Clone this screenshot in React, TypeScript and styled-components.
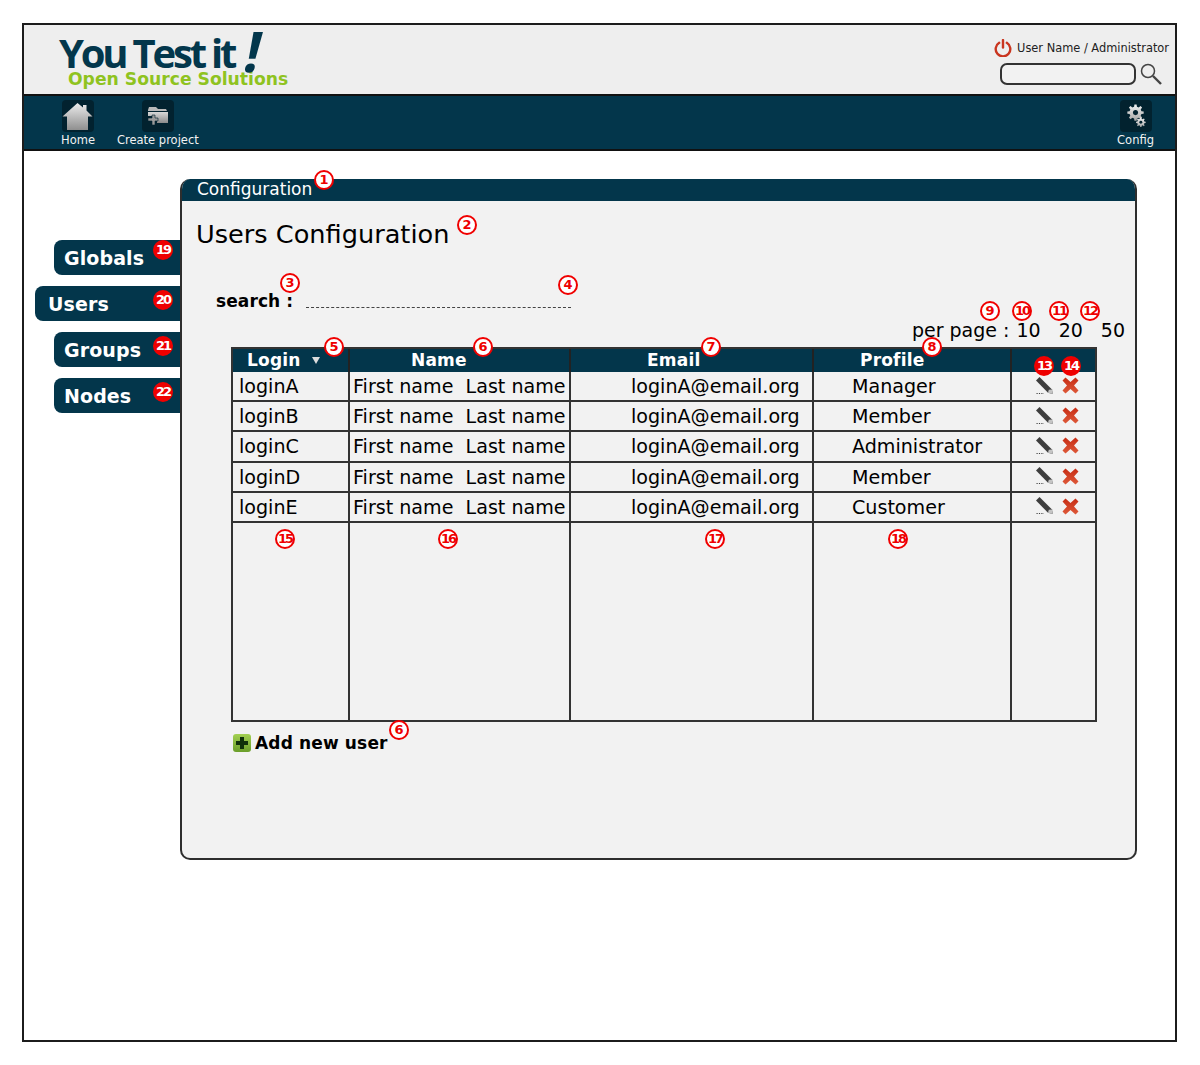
import React from 'react';
import styled, { createGlobalStyle } from 'styled-components';

const GlobalStyle = createGlobalStyle`
  html, body {
    margin: 0;
    padding: 0;
    background: #ffffff;
    font-family: "DejaVu Sans", sans-serif;
    color: #000000;
  }
`;

const Page = styled.div`
  position: relative;
  width: 1200px;
  height: 1065px;
  padding: 23px 0 0 22px;
  box-sizing: border-box;
`;

const Frame = styled.div`
  width: 1155px;
  height: 1019px;
  box-sizing: border-box;
  border: 2px solid #1c1c1c;
  display: flex;
  flex-direction: column;
`;

const Header = styled.header`
  height: 69px;
  background: #eeeeee;
  display: flex;
  justify-content: space-between;
  padding: 3px 6px 0 35px;
  box-sizing: border-box;
`;

const Logo = styled.div`
  display: flex;
  flex-direction: column;
`;

const LogoMain = styled.div`
  display: flex;
  align-items: flex-start;
  height: 42px;
  font-family: "Open Sans", sans-serif;
  font-weight: 700;
  font-size: 40px;
  line-height: 50px;
  letter-spacing: -3.2px;
  color: #03374c;
  white-space: pre;
`;

const LogoBang = styled.span`
  display: inline-block;
  font-size: 56px;
  font-weight: 700;
  line-height: 44px;
  margin-left: 12px;
  transform: skewX(-13deg);
`;

const LogoSub = styled.div`
  font-size: 17.2px;
  font-weight: 700;
  line-height: 18px;
  margin: 0 0 0 9px;
  color: #8fc31f;
`;

const UserArea = styled.div`
  display: flex;
  flex-direction: column;
  align-items: flex-end;
`;

const UserLine = styled.div`
  display: flex;
  align-items: center;
  gap: 5px;
  height: 22px;
  margin-top: 9px;
  font-size: 11.4px;
  color: #222222;
`;

const SearchLine = styled.div`
  display: flex;
  align-items: center;
  gap: 4px;
  margin: 4px 7px 0 0;
`;

const SearchInput = styled.div`
  width: 136px;
  height: 22px;
  box-sizing: border-box;
  border: 2px solid #333333;
  border-radius: 7px;
  background: #f2f2f2;
`;

const Nav = styled.nav`
  height: 57px;
  box-sizing: border-box;
  background: #03364b;
  border-top: 2px solid #111111;
  border-bottom: 2px solid #111111;
  display: flex;
  gap: 22px;
  padding: 4px 21px 0 37px;
`;

const NavItem = styled.div<{ $right?: boolean }>`
  display: flex;
  flex-direction: column;
  align-items: center;
  gap: 1px;
  color: #f2f2f2;
  font-size: 11.5px;
  line-height: 14px;
  margin-left: ${(p) => (p.$right ? 'auto' : '0')};
`;

const NavTile = styled.div`
  width: 32px;
  height: 32px;
  background: #02222f;
  border-radius: 4px;
  display: flex;
  align-items: center;
  justify-content: center;
`;

const Main = styled.main`
  flex: 1;
  display: flex;
  padding-top: 28px;
  background: #ffffff;
`;

const Sidebar = styled.div`
  width: 156px;
  flex-shrink: 0;
  display: flex;
  flex-direction: column;
  align-items: flex-end;
  gap: 11px;
  padding-top: 61px;
`;

const Tab = styled.div<{ $active?: boolean }>`
  width: ${(p) => (p.$active ? '145px' : '126px')};
  height: 35px;
  box-sizing: border-box;
  background: #03364b;
  border-radius: 8px 0 0 8px;
  color: #ffffff;
  font-size: 19px;
  font-weight: 700;
  letter-spacing: 0.1px;
  line-height: 37px;
  padding-left: ${(p) => (p.$active ? '13px' : '10px')};
`;

const Panel = styled.section`
  width: 957px;
  height: 681px;
  box-sizing: border-box;
  border: 2px solid #2e2e2e;
  border-top: 0;
  border-radius: 10px;
  background: #f2f2f2;
  overflow: hidden;
`;

const PanelTitle = styled.div`
  height: 22px;
  background: #03364b;
  color: #ffffff;
  font-size: 17px;
  line-height: 20px;
  padding-left: 15px;
`;

const Heading = styled.h1`
  margin: 15px 0 0 14px;
  height: 36px;
  font-size: 25.6px;
  font-weight: 400;
  line-height: 36px;
`;

const SearchRow = styled.div`
  display: flex;
  align-items: center;
  gap: 13px;
  height: 22px;
  margin: 38px 0 0 34px;
`;

const SearchLabel = styled.span`
  font-size: 17px;
  font-weight: 700;
  letter-spacing: 0.1px;
`;

const DashedField = styled.div`
  width: 265px;
  height: 10px;
  margin-top: 2px;
  border-bottom: 1px dashed #444444;
`;

const PerPage = styled.div`
  display: flex;
  justify-content: flex-end;
  gap: 18px;
  height: 22px;
  margin: 7px 10px 0 0;
  font-size: 19px;
  line-height: 22px;
`;

const PerPageLabel = styled.span`
  margin-right: -11px;
`;

const Table = styled.div`
  width: 866px;
  margin: 6px 0 0 49px;
  box-sizing: border-box;
  border: 2px solid #333333;
`;

const Row = styled.div<{ $kind?: 'head' | 'body' | 'filler' }>`
  display: grid;
  grid-template-columns: 117px 221px 243px 198px 83px;
  height: ${(p) => (p.$kind === 'head' ? '23px' : p.$kind === 'filler' ? '197px' : '30.2px')};
  box-sizing: border-box;
  background: ${(p) => (p.$kind === 'head' ? '#03364b' : 'transparent')};
  border-bottom: ${(p) => (p.$kind === 'body' ? '2px solid #333333' : '0')};
`;

const Cell = styled.div<{ $pad?: number }>`
  border-right: 2px solid #333333;
  padding-left: ${(p) => p.$pad ?? 0}px;
  padding-top: 2px;
  font-size: 19.1px;
  line-height: 26px;
  white-space: pre;
  display: flex;
  align-items: center;
  overflow: hidden;

  &:last-child {
    border-right: 0;
  }
`;

const HeadCell = styled(Cell)`
  border-right-color: #222222;
  color: #ffffff;
  padding-top: 0;
  padding-bottom: 2px;
  font-size: 17px;
  font-weight: 700;
  letter-spacing: 0.2px;
  line-height: 20px;
`;

const SortArrow = styled.span`
  width: 0;
  height: 0;
  margin: 2px 0 0 11px;
  border-left: 4px solid transparent;
  border-right: 4px solid transparent;
  border-top: 7px solid #dddddd;
`;

const Actions = styled.div`
  display: flex;
  align-items: center;
  gap: 9px;
  padding: 0 0 3px 24px;
`;

const AddRow = styled.div`
  display: flex;
  align-items: center;
  gap: 4px;
  height: 20px;
  margin: 11px 0 0 51px;
  font-size: 17px;
  font-weight: 700;
  letter-spacing: 0.15px;
`;

const AddIcon = styled.div`
  width: 18px;
  height: 18px;
  border-radius: 3px;
  background: linear-gradient(#a3d052, #6a9e2a);
  display: flex;
  align-items: center;
  justify-content: center;
`;

const Marker = styled.div<{ $x: number; $y: number; $solid?: boolean; $small?: boolean }>`
  position: absolute;
  left: ${(p) => p.$x - 10}px;
  top: ${(p) => p.$y - 10}px;
  width: 20px;
  height: 20px;
  box-sizing: border-box;
  border: 2px solid #f00000;
  border-radius: 50%;
  background: ${(p) => (p.$solid ? '#ee0000' : '#ffffff')};
  color: ${(p) => (p.$solid ? '#ffffff' : '#ee0000')};
  font-size: 13px;
  font-weight: 700;
  line-height: 16px;
  letter-spacing: ${(p) => (p.$small ? '-2px' : '0')};
  text-align: center;
`;

const HomeIcon = () => (
  <svg width="31" height="29" viewBox="0 0 31 29">
    <defs>
      <linearGradient id="greyA" x1="0" y1="0" x2="0" y2="1">
        <stop offset="0" stopColor="#ececec" />
        <stop offset="1" stopColor="#8f8f8f" />
      </linearGradient>
    </defs>
    <path d="M15.5 1 L21 5.5 V3 H24.5 V8.5 L30.5 14.5 H26 V28 H5 V14.5 H0.5 Z" fill="url(#greyA)" />
  </svg>
);

const FolderIcon = () => (
  <svg width="22" height="22" viewBox="0 0 22 22">
    <defs>
      <linearGradient id="greyB" x1="0" y1="0" x2="0" y2="1">
        <stop offset="0" stopColor="#d8d8d8" />
        <stop offset="1" stopColor="#8a8a8a" />
      </linearGradient>
    </defs>
    <path d="M1 5 L2 2 H9 L11 4 H19 L20 6 H1 Z" fill="#b9b9b9" />
    <path d="M1 7 H21 V18 H10 V15 H8 V11 H1 Z" fill="url(#greyB)" />
    <path d="M5 10 H8 V13 H11 V16 H8 V20 H5 V16 H1 V13 H5 Z" fill="#9a9a9a" stroke="#02222f" strokeWidth="0.6" />
  </svg>
);

// toothed outline, computed so both gears share one shape
const gearPath = (cx: number, cy: number, r: number, teeth: number) => {
  const step = (Math.PI * 2) / teeth;
  const inner = r * 0.74;
  const points: string[] = [];
  for (let i = 0; i < teeth; i++) {
    const a = i * step;
    const corners = [
      [inner, a - step * 0.3],
      [r, a - step * 0.17],
      [r, a + step * 0.17],
      [inner, a + step * 0.3],
    ];
    corners.forEach(([rad, ang]) => {
      points.push(`${(cx + rad * Math.cos(ang)).toFixed(2)} ${(cy + rad * Math.sin(ang)).toFixed(2)}`);
    });
  }
  return `M${points.join(' L')} Z`;
};

const GearsIcon = () => (
  <svg width="32" height="32" viewBox="0 0 33 33">
    <defs>
      <linearGradient id="greyC" x1="0" y1="0" x2="0" y2="1">
        <stop offset="0" stopColor="#f2f2f2" />
        <stop offset="1" stopColor="#a6a6a6" />
      </linearGradient>
    </defs>
    <path d={gearPath(16, 13, 8.5, 8)} fill="url(#greyC)" />
    <circle cx="16" cy="13" r="2.6" fill="#02222f" />
    <path d={gearPath(21.5, 23, 5, 8)} fill="url(#greyC)" />
    <circle cx="21.5" cy="23" r="1.5" fill="#02222f" />
  </svg>
);

const PowerIcon = () => (
  <svg width="18" height="18" viewBox="0 0 18 18" fill="none" stroke="#c9351f" strokeWidth="2.4" strokeLinecap="round">
    <path d="M5.2 3.8 A7.3 7.3 0 1 0 12.8 3.8" />
    <path d="M9 1 V8.5" />
  </svg>
);

const MagnifierIcon = () => (
  <svg width="22" height="22" viewBox="0 0 22 22" fill="none" stroke="#444444">
    <circle cx="8" cy="8" r="6.5" strokeWidth="1.5" />
    <path d="M13 13 L21 21" strokeWidth="2.4" />
  </svg>
);

const PencilIcon = () => (
  <svg width="17" height="18" viewBox="0 0 17 18">
    <path d="M3.5 0 L16 12.5 L16.8 17 L12 15.8 L0 3.5 Z" fill="#3e3e3e" />
    <path d="M12.8 12.8 L16 12.5 L16.8 17 L12 15.8 Z" fill="#c4c4c4" />
    <path d="M0.5 16.5 H8" stroke="#444444" strokeWidth="1.2" strokeDasharray="1.2 1.2" />
  </svg>
);

const CrossIcon = () => (
  <svg width="17" height="17" viewBox="0 0 17 17">
    <defs>
      <linearGradient id="redX" x1="0" y1="0" x2="0" y2="1">
        <stop offset="0" stopColor="#c72c14" />
        <stop offset="1" stopColor="#de5a3a" />
      </linearGradient>
    </defs>
    <path
      d="M3.5 0.5 L8.5 5 L13.5 0.5 L16.5 3.5 L12 8.5 L16.5 13.5 L13.5 16.5 L8.5 12 L3.5 16.5 L0.5 13.5 L5 8.5 L0.5 3.5 Z"
      fill="url(#redX)"
    />
  </svg>
);

const PlusIcon = () => (
  <svg width="14" height="14" viewBox="0 0 14 14">
    <path d="M5 1 H9 V5 H13 V9 H9 V13 H5 V9 H1 V5 H5 Z" fill="#10300a" />
  </svg>
);

const users = [
  { login: 'loginA', profile: 'Manager' },
  { login: 'loginB', profile: 'Member' },
  { login: 'loginC', profile: 'Administrator' },
  { login: 'loginD', profile: 'Member' },
  { login: 'loginE', profile: 'Customer' },
];

const markers = [
  { n: 1, x: 324, y: 180 },
  { n: 2, x: 467, y: 225 },
  { n: 3, x: 290, y: 283 },
  { n: 4, x: 568, y: 285 },
  { n: 5, x: 334, y: 347 },
  { n: 6, x: 483, y: 347 },
  { n: 7, x: 711, y: 347 },
  { n: 8, x: 932, y: 347 },
  { n: 9, x: 990, y: 311 },
  { n: 10, x: 1022, y: 311 },
  { n: 11, x: 1059, y: 311 },
  { n: 12, x: 1090, y: 311 },
  { n: 13, x: 1044, y: 366, solid: true },
  { n: 14, x: 1071, y: 366, solid: true },
  { n: 15, x: 285, y: 539 },
  { n: 16, x: 448, y: 539 },
  { n: 17, x: 715, y: 539 },
  { n: 18, x: 898, y: 539 },
  { n: 19, x: 163, y: 250, solid: true },
  { n: 20, x: 163, y: 300, solid: true },
  { n: 21, x: 163, y: 346, solid: true },
  { n: 22, x: 163, y: 392, solid: true },
  { n: 6, x: 399, y: 730 },
];

function App() {
  return (
    <Page>
      <GlobalStyle />
      <Frame>
        <Header>
          <Logo>
            <LogoMain>
              You Test it<LogoBang>!</LogoBang>
            </LogoMain>
            <LogoSub>Open Source Solutions</LogoSub>
          </Logo>
          <UserArea>
            <UserLine>
              <PowerIcon />
              User Name / Administrator
            </UserLine>
            <SearchLine>
              <SearchInput />
              <MagnifierIcon />
            </SearchLine>
          </UserArea>
        </Header>
        <Nav>
          <NavItem>
            <NavTile>
              <HomeIcon />
            </NavTile>
            Home
          </NavItem>
          <NavItem>
            <NavTile>
              <FolderIcon />
            </NavTile>
            Create project
          </NavItem>
          <NavItem $right>
            <NavTile>
              <GearsIcon />
            </NavTile>
            Config
          </NavItem>
        </Nav>
        <Main>
          <Sidebar>
            <Tab>Globals</Tab>
            <Tab $active>Users</Tab>
            <Tab>Groups</Tab>
            <Tab>Nodes</Tab>
          </Sidebar>
          <Panel>
            <PanelTitle>Configuration</PanelTitle>
            <Heading>Users Configuration</Heading>
            <SearchRow>
              <SearchLabel>search :</SearchLabel>
              <DashedField />
            </SearchRow>
            <PerPage>
              <PerPageLabel>per page :</PerPageLabel>
              <span>10</span>
              <span>20</span>
              <span>50</span>
            </PerPage>
            <Table>
              <Row $kind="head">
                <HeadCell $pad={14}>
                  Login
                  <SortArrow />
                </HeadCell>
                <HeadCell $pad={61}>Name</HeadCell>
                <HeadCell $pad={76}>Email</HeadCell>
                <HeadCell $pad={46}>Profile</HeadCell>
                <HeadCell />
              </Row>
              {users.map((user) => (
                <Row $kind="body" key={user.login}>
                  <Cell $pad={6}>{user.login}</Cell>
                  <Cell $pad={3}>First name  Last name</Cell>
                  <Cell $pad={60}>loginA@email.org</Cell>
                  <Cell $pad={38}>{user.profile}</Cell>
                  <Cell>
                    <Actions>
                      <PencilIcon />
                      <CrossIcon />
                    </Actions>
                  </Cell>
                </Row>
              ))}
              <Row $kind="filler">
                <Cell />
                <Cell />
                <Cell />
                <Cell />
                <Cell />
              </Row>
            </Table>
            <AddRow>
              <AddIcon>
                <PlusIcon />
              </AddIcon>
              Add new user
            </AddRow>
          </Panel>
        </Main>
      </Frame>
      {markers.map((m) => (
        <Marker key={`${m.n}-${m.x}`} $x={m.x} $y={m.y} $solid={m.solid} $small={m.n > 9}>
          {m.n}
        </Marker>
      ))}
    </Page>
  );
}

export default App;
